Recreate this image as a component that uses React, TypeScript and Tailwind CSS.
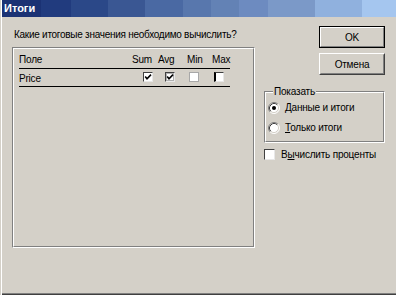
import React from "react";

const F = "font-['Liberation_Sans',Arial,sans-serif]";

function TableCheck({ checked, variant }: { checked?: boolean; variant?: "dotted" | "light" | "thick" }) {
  const base =
    variant === "light"
      ? "border border-[#a8a8a8]"
      : variant === "thick"
      ? "border border-t-[#404040] border-l-black border-l-2 border-r-[#e8e8e8] border-b-[#e8e8e8]"
      : "border border-t-[#404040] border-l-[#404040] border-r-[#e8e8e8] border-b-[#e8e8e8]";
  return (
    <div className={`w-[10px] h-[10px] bg-white ${base} flex items-center justify-center`}>
      {checked && (
        <svg width="8" height="8" viewBox="0 0 8 8">
          {variant === "dotted" && (
            <rect x="0.5" y="0.5" width="7" height="7" fill="none" stroke="#606060" strokeWidth="1" strokeDasharray="1 1" />
          )}
          <polyline points="1.2,3.6 3,5.8 7,1.6" fill="none" stroke="black" strokeWidth="1.6" />
        </svg>
      )}
    </div>
  );
}

function Radio({ selected }: { selected?: boolean }) {
  return (
    <svg width="12" height="12" viewBox="0 0 12 12" className="shrink-0">
      <circle cx="6" cy="6" r="5" fill="white" />
      <path d="M2.11 9.89 A5.5 5.5 0 0 1 9.89 2.11" fill="none" stroke="#808080" strokeWidth="1" />
      <path d="M9.89 2.11 A5.5 5.5 0 0 1 2.11 9.89" fill="none" stroke="#ffffff" strokeWidth="1" />
      <path d="M2.82 9.18 A4.5 4.5 0 0 1 9.18 2.82" fill="none" stroke="#404040" strokeWidth="1" />
      <path d="M9.18 2.82 A4.5 4.5 0 0 1 2.82 9.18" fill="none" stroke="#d4d0c8" strokeWidth="1" />
      {selected && <circle cx="6" cy="6" r="2" fill="black" />}
    </svg>
  );
}

const blocks: { w: string; c: string }[] = [
  { w: "w-[30px]", c: "bg-[#213b7e]" },
  { w: "w-[37px]", c: "bg-[#2b4888]" },
  { w: "w-[37px]", c: "bg-[#3a5793]" },
  { w: "w-[38px]", c: "bg-[#4a69a3]" },
  { w: "w-[28px]", c: "bg-[#5877ad]" },
  { w: "w-[28px]", c: "bg-[#6382b5]" },
  { w: "w-[29px]", c: "bg-[#6d8bc0]" },
  { w: "w-[47px]", c: "bg-[#7b99c8]" },
  { w: "w-[47px]", c: "bg-[#90b1de]" },
  { w: "w-[34px]", c: "bg-[#a5c6ef]" },
];

export default function App() {
  return (
    <div className={`w-[396px] h-[295px] bg-[#d4d0c8] flex ${F} text-[10px] tracking-[-0.2px] leading-[13px] text-black overflow-hidden`}>
      <div className="w-px bg-[#d4d0c8]" />
      <div className="w-px bg-white" />
      <div className="flex-1 flex flex-col">
        {/* Title bar */}
        <div className="h-[17px] flex shrink-0">
          <div className="w-[39px] bg-[#1b3274] pl-[2px] text-white font-bold text-[11px] tracking-normal leading-[17px] whitespace-nowrap">Итоги</div>
          {blocks.map((b, i) => (
            <div key={i} className={`${b.w} ${b.c}`} />
          ))}
        </div>

        {/* Body */}
        <div className="flex-1 flex pl-[10px]">
          {/* Left column */}
          <div className="w-[243px] flex flex-col">
            <div className="mt-[11px] pl-[2px] whitespace-nowrap tracking-[-0.27px]">Какие итоговые значения необходимо вычислить?</div>
            <div className="mt-[6px] h-[201px] border border-t-[#808080] border-l-[#808080] border-r-white border-b-white">
              <div className="h-full border border-t-white border-l-white border-r-[#808080] border-b-[#808080]">
                <div className="ml-[5px] w-[211px]">
                  <div className="h-[20px] border-b border-black grid grid-cols-[113px_26px_29px_25px_1fr] pt-[4px]">
                    <div>Поле</div>
                    <div>Sum</div>
                    <div>Avg</div>
                    <div>Min</div>
                    <div>Max</div>
                  </div>
                  <div className="h-[18px] border-b border-black grid grid-cols-[113px_26px_29px_25px_1fr] pt-[3px]">
                    <div>Price</div>
                    <div className="pl-[11px]">
                      <TableCheck checked />
                    </div>
                    <div className="pl-[7px]">
                      <TableCheck checked variant="dotted" />
                    </div>
                    <div className="pl-[2px]">
                      <TableCheck variant="light" />
                    </div>
                    <div className="pl-[2px]">
                      <TableCheck variant="thick" />
                    </div>
                  </div>
                </div>
              </div>
            </div>
          </div>

          {/* Right column */}
          <div className="ml-[9px] w-[121px] flex flex-col">
            <div className="mt-[9px] self-end w-[66px] h-[22px] border border-black">
              <div className="h-full border border-t-white border-l-white border-r-[#808080] border-b-[#808080] flex items-center justify-center">
                OK
              </div>
            </div>
            <div className="mt-[5px] self-end w-[66px] h-[22px] border border-t-white border-l-white border-r-[#404040] border-b-[#404040]">
              <div className="h-full border border-t-[#d4d0c8] border-l-[#d4d0c8] border-r-[#808080] border-b-[#808080] flex items-center justify-center">
                Отмена
              </div>
            </div>

            <div className="relative mt-[16px] h-[52px] border border-t-[#808080] border-l-[#808080] border-r-white border-b-white">
              <div className="h-full border border-t-white border-l-white border-r-[#808080] border-b-[#808080] pl-[2px] pt-[8px] flex flex-col gap-[7px]">
                <div className="flex items-center gap-[5px]">
                  <Radio selected />
                  <span className="whitespace-nowrap">
                    <span className="underline">Д</span>анные и итоги
                  </span>
                </div>
                <div className="flex items-center gap-[5px]">
                  <Radio />
                  <span className="whitespace-nowrap">
                    <span className="underline">Т</span>олько итоги
                  </span>
                </div>
              </div>
              <span className="absolute left-[8px] top-[-7px] bg-[#d4d0c8] px-px">Показать</span>
            </div>

            <div className="mt-[5px] flex items-center gap-[6px]">
              <div className="w-[11px] h-[11px] bg-white border border-t-[#404040] border-l-[#404040] border-r-[#e8e8e8] border-b-[#e8e8e8] shrink-0" />
              <span className="whitespace-nowrap">
                В<span className="underline">ы</span>числить проценты
              </span>
            </div>
          </div>
        </div>

        <div className="h-px bg-[#808080] shrink-0" />
        <div className="h-px bg-[#404040] shrink-0" />
      </div>
    </div>
  );
}
